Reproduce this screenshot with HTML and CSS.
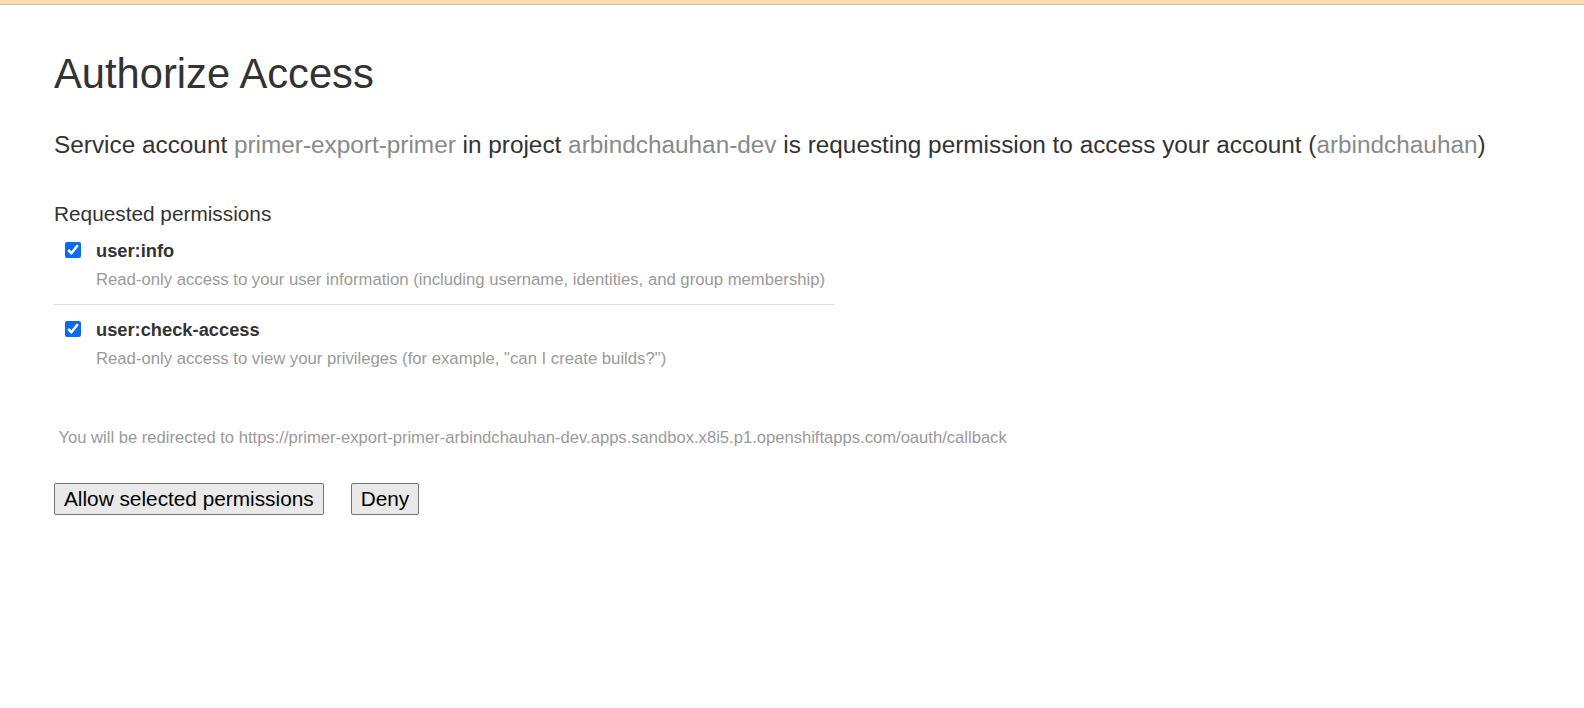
FILE: index.html
```html
<!DOCTYPE html>
<html lang="en">
<head>
<meta charset="utf-8">
<title>Authorize Access</title>
<link rel="stylesheet" href="styles.css">
</head>
<body>
<div class="topbar"></div>
<main class="page">
  <h1 class="title">Authorize Access</h1>
  <p class="lead">Service account <span class="muted">primer-export-primer</span> in project <span class="muted">arbindchauhan-dev</span> is requesting permission to access your account (<span class="muted">arbindchauhan</span>)</p>
  <form class="perm-form">
    <h4 class="perm-heading">Requested permissions</h4>
    <div class="perm">
      <label class="perm-row">
        <input type="checkbox" class="perm-check" checked>
        <span class="perm-text">
          <span class="perm-name">user:info</span>
          <span class="perm-desc">Read-only access to your user information (including username, identities, and group membership)</span>
        </span>
      </label>
    </div>
    <div class="perm perm-last">
      <label class="perm-row">
        <input type="checkbox" class="perm-check" checked>
        <span class="perm-text">
          <span class="perm-name">user:check-access</span>
          <span class="perm-desc">Read-only access to view your privileges (for example, "can I create builds?")</span>
        </span>
      </label>
    </div>
    <p class="redirect">You will be redirected to https://primer-export-primer-arbindchauhan-dev.apps.sandbox.x8i5.p1.openshiftapps.com/oauth/callback</p>
    <div class="actions">
      <button type="button" class="btn">Allow selected permissions</button>
      <button type="button" class="btn">Deny</button>
    </div>
  </form>
</main>
</body>
</html>
```
FILE: styles.css
```css
html, body {
  margin: 0;
  padding: 0;
  background: #ffffff;
}
body {
  font-family: "Liberation Sans", Arial, sans-serif;
  color: #333333;
}
.topbar {
  height: 4px;
  background: #fdd9b0;
  border-bottom: 1px solid #cdbda8;
}
.page {
  padding: 0 54px;
}
.title {
  margin: 0;
  padding-top: 44px;
  font-size: 41.7px;
  font-weight: 400;
  line-height: 50px;
  color: #333333;
}
.lead {
  margin: 30px 0 0;
  font-size: 24.35px;
  line-height: 32px;
  color: #333333;
}
.muted {
  color: #8a8a8a;
}
.perm-form {
  margin-top: 39px;
}
.perm-heading {
  margin: 0;
  font-size: 20.8px;
  font-weight: 400;
  line-height: 28px;
}
.perm {
  width: 780px;
  border-bottom: 1px solid #dddddd;
  padding: 12px 0 13px;
}
.perm-last {
  border-bottom: none;
  padding-top: 14px;
}
.perm-row {
  display: flex;
  align-items: flex-start;
  gap: 15px;
  padding-left: 11px;
}
.perm-check {
  margin: 2px 0 0;
  width: 16px;
  height: 16px;
  accent-color: #0b6bf0;
}
.perm-text {
  display: flex;
  flex-direction: column;
  gap: 7px;
}
.perm-name {
  font-weight: 700;
  font-size: 18.3px;
  line-height: 22px;
  color: #333333;
}
.perm-desc {
  font-size: 16.7px;
  line-height: 22px;
  color: #9a9a9a;
}
.redirect {
  margin: 44px 0 0 4.5px;
  font-size: 16.6px;
  line-height: 22px;
  color: #9a9a9a;
}
.actions {
  display: flex;
  gap: 27px;
  margin-top: 34px;
}
.btn {
  font-family: "Liberation Sans", Arial, sans-serif;
  font-size: 20.8px;
  line-height: 24px;
  color: #000000;
  background: #e9e9e9;
  border: 1px solid #767676;
  border-radius: 2px;
  padding: 3px 9px;
}
```
